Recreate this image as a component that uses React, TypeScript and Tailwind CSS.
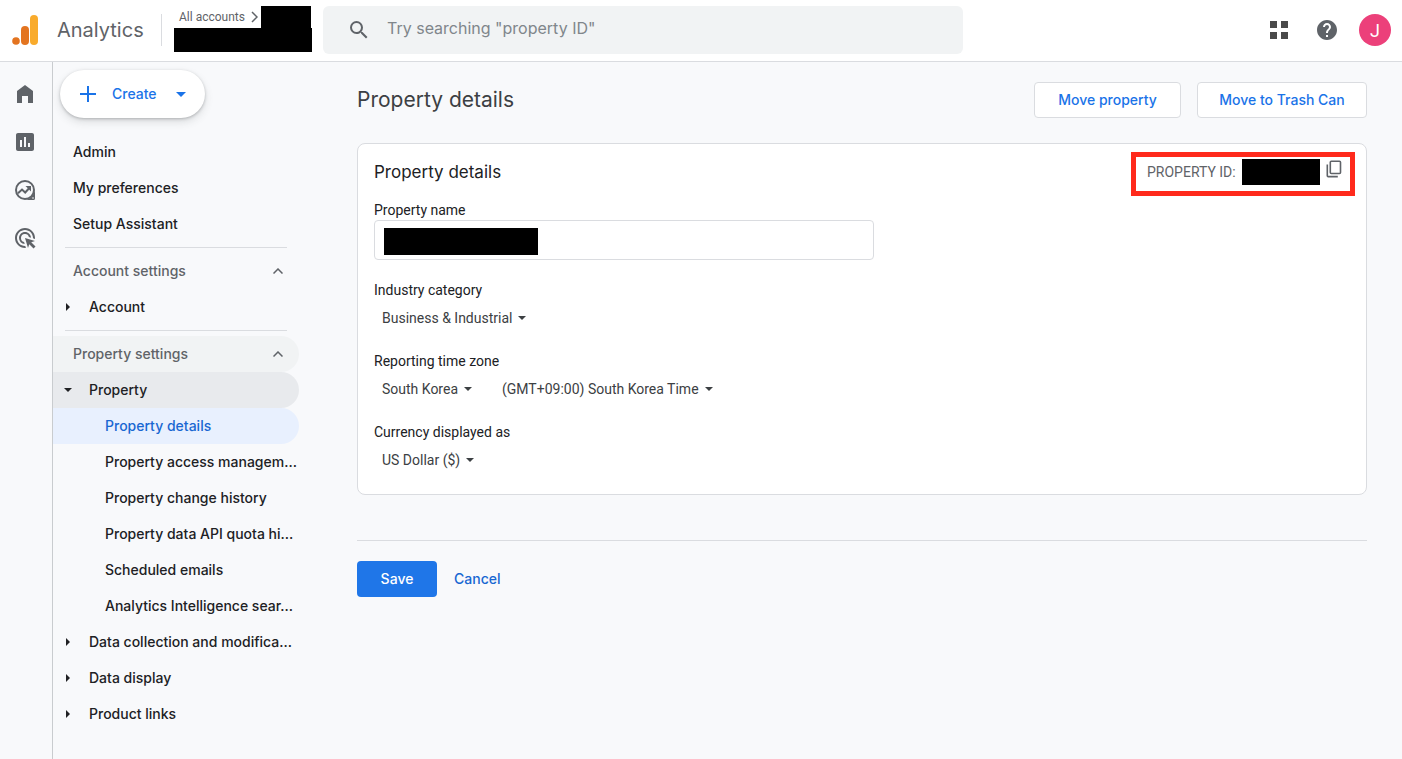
import React from 'react';
import { MdAdsClick, MdHelp, MdInsertChart, MdSearch } from 'react-icons/md';

type NavEntry = { label: string; active?: boolean };

const topLinks = ['Admin', 'My preferences', 'Setup Assistant'];

const propertyLinks: NavEntry[] = [
  { label: 'Property details', active: true },
  { label: 'Property access managem...' },
  { label: 'Property change history' },
  { label: 'Property data API quota hi...' },
  { label: 'Scheduled emails' },
  { label: 'Analytics Intelligence sear...' },
];

const closedGroups = ['Data collection and modifica...', 'Data display', 'Product links'];

const Logo: React.FC = () => (
  <svg viewBox="0 0 26 30" className="h-[30px] w-[26px]" aria-hidden="true">
    <rect x="18" y="0" width="8" height="30" rx="4" fill="#f9ab2c" />
    <rect x="9" y="11" width="8" height="19" rx="4" fill="#e37420" />
    <circle cx="4" cy="26" r="3.8" fill="#e37420" />
  </svg>
);

const HomeIcon: React.FC = () => (
  <svg viewBox="0 0 24 24" className="size-6" fill="currentColor" aria-hidden="true">
    <path d="M4 21V9l8-6 8 6v12h-5v-7H9v7z" />
  </svg>
);

const ExploreIcon: React.FC = () => (
  <svg viewBox="0 0 24 24" className="size-6" fill="none" stroke="currentColor" aria-hidden="true">
    <circle cx="12" cy="12" r="9" strokeWidth="2" />
    <path d="M22 12v8.5q0 1.5-1.5 1.5H12q8-1 10-10z" fill="currentColor" stroke="none" />
    <circle cx="20" cy="20" r="0.8" fill="#f8f9fa" stroke="none" />
    <path d="M5 15.2l4-3.7 3.2 3 4.6-5" strokeWidth="2" />
    <path d="M12.5 8H18v5.5z" fill="currentColor" stroke="none" />
  </svg>
);

const AppsIcon: React.FC = () => (
  <svg viewBox="0 0 18 18" className="size-[18px]" fill="#4a4a4a" aria-hidden="true">
    <path d="M0 0h7v7H0zM11 0h7v7h-7zM0 11h7v7H0zM11 11h7v7h-7z" />
  </svg>
);

const CopyIcon: React.FC = () => (
  <svg viewBox="0 0 16 18" className="h-[18px] w-4" fill="none" stroke="#5f6368" strokeWidth="1.6" aria-hidden="true">
    <rect x="4.3" y="1.3" width="10.2" height="12.2" rx="1" />
    <path d="M1.3 4.5v11.2q0 .9.9.9h9.6" />
  </svg>
);

const CaretDown: React.FC = () => (
  <svg viewBox="0 0 8 4" className="pointer-events-none h-1 w-2 shrink-0" fill="currentColor" aria-hidden="true">
    <path d="M0 0h8L4 4z" />
  </svg>
);

const CaretRight: React.FC = () => (
  <svg viewBox="0 0 4 8" className="h-2 w-1" fill="currentColor" aria-hidden="true">
    <path d="M0 0v8l4-4z" />
  </svg>
);

const ChevronUp: React.FC = () => (
  <svg viewBox="0 0 10 6" className="h-[6px] w-[10px]" fill="none" stroke="#5f6368" strokeWidth="1.5" aria-hidden="true">
    <path d="M.5 5.5L5 1l4.5 4.5" />
  </svg>
);

const Header: React.FC = () => (
  <header className="flex h-[62px] items-center border-b border-[#dadce0] bg-white pr-[11px] pb-px pl-3">
    <Logo />
    <span className="w-[104px] shrink-0 pl-[19px] text-[20px] leading-7 text-[#5f6368]">Analytics</span>
    <div className="ml-[19px] h-8 w-px bg-[#dadce0]" />
    <div className="ml-3 h-12 w-[138px] shrink-0">
      <div className="flex h-[22px] items-center justify-between pr-px pl-[5px]">
        <a href="#accounts" className="flex items-center gap-1.5 font-[Roboto,sans-serif] text-[12px] leading-5 whitespace-nowrap text-[#5f6368]">
          All accounts
          <svg viewBox="0 0 7 12" className="h-3 w-[7px]" fill="none" stroke="currentColor" strokeWidth="1.5" aria-hidden="true">
            <path d="M1 1l5 5-5 5" />
          </svg>
        </a>
        <span className="h-[22px] w-[50px] bg-black" />
      </div>
      <div className="h-6 bg-black" />
    </div>
    <label className="ml-[11px] flex h-12 w-full max-w-[640px] items-center rounded-md bg-[#f1f3f4] pl-6">
      <MdSearch className="size-6 text-[#5f6368]" />
      <input
        type="search"
        aria-label="Search"
        placeholder={'Try searching "property ID"'}
        className="ml-4 h-10 grow bg-transparent pb-1 text-[16px] outline-none placeholder:text-[#80868b]"
      />
    </label>
    <div className="ml-auto flex items-center">
      <button aria-label="Apps" className="mr-[27px]">
        <AppsIcon />
      </button>
      <button aria-label="Help" className="mr-5">
        <MdHelp className="size-6 text-[#5f6368]" />
      </button>
      <button className="size-8 rounded-full bg-[#ec407a] font-[Roboto,sans-serif] text-[18px] text-white">J</button>
    </div>
  </header>
);

const Rail: React.FC = () => (
  <nav aria-label="Sections" className="flex w-[53px] shrink-0 flex-col border-r border-[#c9cccf] pt-2 pl-[1px] text-[#5f6368]">
    <a href="#home" aria-label="Home" className="flex h-12 w-12 items-center justify-center"><HomeIcon /></a>
    <a href="#reports" aria-label="Reports" className="flex h-12 w-12 items-center justify-center"><MdInsertChart className="size-6" /></a>
    <a href="#explore" aria-label="Explore" className="flex h-12 w-12 items-center justify-center"><ExploreIcon /></a>
    <a href="#advertising" aria-label="Advertising" className="flex h-12 w-12 items-center justify-center"><MdAdsClick className="size-6" /></a>
  </nav>
);

const Group: React.FC<{ label: string }> = ({ label }) => (
  <button className="flex h-9 w-full items-center pl-[13px] font-medium whitespace-nowrap">
    <span className="w-[23px]"><CaretRight /></span>
    {label}
  </button>
);

const Sidebar: React.FC = () => (
  <aside className="w-[246px] shrink-0 pt-2 text-[14px] leading-5 text-[#202124]">
    <button className="ml-[7px] flex h-12 w-[145px] items-center rounded-full bg-white pl-5 font-medium text-[#1a73e8] shadow-[0_1px_3px_rgba(60,64,67,0.3),0_4px_8px_rgba(60,64,67,0.15)]">
      <svg viewBox="0 0 16 16" className="size-4 shrink-0" stroke="currentColor" strokeWidth="2" aria-hidden="true">
        <path d="M8 0v16M0 8h16" />
      </svg>
      <span className="w-20 pl-4 text-left">Create</span>
      <svg viewBox="0 0 10 5" className="h-[5px] w-[10px]" fill="currentColor" aria-hidden="true">
        <path d="M0 0h10L5 5z" />
      </svg>
    </button>

    <nav aria-label="Admin" className="mt-4">
      {topLinks.map((label) => (
        <a key={label} href="#admin" className="flex h-9 items-center pl-5 font-medium">
          {label}
        </a>
      ))}

      <hr className="mx-3 mt-[5px] mb-[5px] border-[#dadce0]" />
      <button className="flex h-9 w-full items-center justify-between pr-4 pl-5 font-medium text-[#5f6368]">
        Account settings
        <ChevronUp />
      </button>
      <Group label="Account" />

      <hr className="mx-3 mt-[5px] mb-[5px] border-[#dadce0]" />
      <button className="flex h-9 w-full items-center justify-between rounded-r-full bg-[#f1f3f4] pr-4 pl-5 font-medium text-[#5f6368]">
        Property settings
        <ChevronUp />
      </button>
      <button className="flex h-9 w-full items-center rounded-r-full bg-[#e8eaed] pl-[11px] font-medium">
        <span className="w-[25px]"><CaretDown /></span>
        Property
      </button>
      {propertyLinks.map(({ label, active }) => (
        <a
          key={label}
          href="#property"
          className={`flex h-9 items-center rounded-r-full pl-[52px] font-medium whitespace-nowrap ${
            active ? 'bg-[#e8f0fe] text-[#1967d2]' : ''
          }`}
        >
          {label}
        </a>
      ))}
      {closedGroups.map((label) => (
        <Group key={label} label={label} />
      ))}
    </nav>
  </aside>
);

const Picker: React.FC<{ id?: string; name: string; value: string }> = ({ id, name, value }) => (
  <span className="flex items-center gap-1.5 text-[#3c4043]">
    <select id={id} aria-label={name} className="field-sizing-content h-5 appearance-none bg-transparent">
      <option>{value}</option>
    </select>
    <CaretDown />
  </span>
);

const DetailsCard: React.FC = () => (
  <section className="rounded-lg border border-[#dadce0] bg-white pt-2 pr-[11px] pb-6 pl-4 font-[Roboto,sans-serif] text-[14px] leading-5 text-[#202124]">
    <div className="flex items-start justify-between">
      <h2 className="pt-2 font-[Inter,sans-serif] text-[17px] leading-6">Property details</h2>
      <div className="flex h-11 w-[224px] items-start border-[5px] border-[#ff2a1c] pt-[2px] pl-[11px]">
        <span className="w-[95px] pt-[3px] whitespace-nowrap text-[#5f6368]">PROPERTY ID:</span>
        <span className="h-[26px] w-[78px] bg-black" />
        <button aria-label="Copy property ID" className="mt-px ml-1.5">
          <CopyIcon />
        </button>
      </div>
    </div>

    <label htmlFor="property-name" className="mt-1 block">Property name</label>
    <div className="relative max-w-[500px]">
      <input id="property-name" type="text" className="block h-10 w-full rounded border border-[#dadce0] px-2.5 outline-none" />
      <span className="pointer-events-none absolute top-2 left-2.5 h-[27px] w-[154px] bg-black" />
    </div>

    <label htmlFor="industry" className="mt-5 block">Industry category</label>
    <div className="mt-2 flex pl-2">
      <Picker id="industry" name="Industry category" value="Business & Industrial" />
    </div>

    <label htmlFor="country" className="mt-[23px] block">Reporting time zone</label>
    <div className="mt-2 flex gap-[30px] pl-2">
      <Picker id="country" name="Reporting time zone" value="South Korea" />
      <Picker name="Time zone" value="(GMT+09:00) South Korea Time" />
    </div>

    <label htmlFor="currency" className="mt-[23px] block">Currency displayed as</label>
    <div className="mt-2 flex pl-2">
      <Picker id="currency" name="Currency displayed as" value="US Dollar ($)" />
    </div>
  </section>
);

const App: React.FC = () => {
  return (
    <div className="flex min-h-screen flex-col bg-[#f8f9fb] font-[Inter,sans-serif]">
      <Header />
      <div className="flex grow">
        <Rail />
        <Sidebar />
        <main className="min-w-0 grow pt-5 pr-[35px] pl-[58px] text-[14px] leading-5">
          <div className="mb-[25px] flex items-center gap-4">
            <h1 className="mr-auto text-[21px] leading-7 text-[#3c4043]">Property details</h1>
            <button className="h-9 w-[147px] rounded border border-[#dadce0] bg-white font-medium whitespace-nowrap text-[#1a73e8]">
              Move property
            </button>
            <button className="h-9 w-[170px] rounded border border-[#dadce0] bg-white font-medium whitespace-nowrap text-[#1a73e8]">
              Move to Trash Can
            </button>
          </div>

          <DetailsCard />

          <hr className="mt-[45px] border-[#dadce0]" />
          <div className="flex items-center gap-[17px] pt-5 pb-8">
            <button className="h-9 w-20 rounded bg-[#1f76e8] font-medium text-white">Save</button>
            <button className="h-9 font-medium text-[#1967d2]">Cancel</button>
          </div>
        </main>
      </div>
    </div>
  );
};

export default App;
